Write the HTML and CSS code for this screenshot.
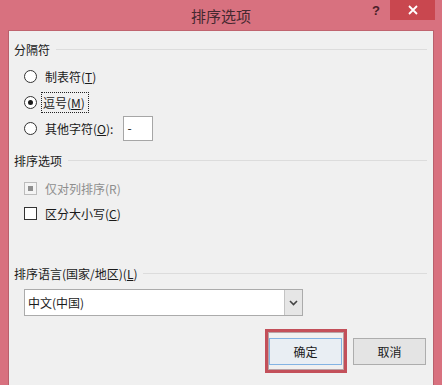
FILE: index.html
```
<!DOCTYPE html>
<html lang="zh-CN">
<head>
  <meta charset="UTF-8" />
  <title>排序选项</title>
  <link rel="stylesheet" href="styles.css">
</head>
<body>
  <div class="window">
    <div class="titlebar">
      <span class="title">排序选项</span>
      <span class="help">?</span>
      <span class="close">
        <svg width="10" height="10" viewBox="0 0 10 10"><path d="M1 1 L9 9 M9 1 L1 9" stroke="#fff" stroke-width="1.8"/></svg>
      </span>
    </div>

    <div class="client">
      <div class="group-title"><span>分隔符</span><i></i></div>
      <div class="opt-row">
        <span class="radio"></span>
        <span class="lbl">制表符(<u>T</u>)</span>
      </div>
      <div class="opt-row">
        <span class="radio checked"></span>
        <span class="lbl focus">逗号(<u>M</u>)</span>
      </div>
      <div class="opt-row">
        <span class="radio"></span>
        <span class="lbl">其他字符(<u>O</u>):</span>
        <span class="small-input">-</span>
      </div>

      <div class="group-title second"><span>排序选项</span><i></i></div>
      <div class="chk-row disabled">
        <span class="checkbox mixed"></span>
        <span class="lbl">仅对列排序(R)</span>
      </div>
      <div class="chk-row">
        <span class="checkbox"></span>
        <span class="lbl">区分大小写(<u>C</u>)</span>
      </div>

      <div class="group-title third"><span>排序语言(国家/地区)(<u>L</u>)</span><i></i></div>
      <div class="select">
        <span class="select-text">中文(中国)</span>
        <span class="select-btn">
          <svg width="9" height="6" viewBox="0 0 9 6"><path d="M1 1 L4.5 4.5 L8 1" fill="none" stroke="#444" stroke-width="1.6"/></svg>
        </span>
      </div>

      <div class="buttons">
        <button class="btn default">确定</button>
        <button class="btn">取消</button>
      </div>
    </div>
  </div>
</body>
</html>
```

FILE: styles.css
```
body {
  margin: 0;
  background: #d8717f;
  font-family: "Noto Sans CJK SC", "Microsoft YaHei", sans-serif;
  font-size: 12px;
  color: #1a1a1a;
}
.window {
  width: 442px;
  height: 385px;
}
.titlebar {
  height: 30px;
  position: relative;
  display: flex;
  justify-content: center;
  align-items: center;
}
.title {
  font-size: 15px;
  color: #452830;
}
.help {
  position: absolute;
  left: 372px;
  top: 3px;
  font-family: "Liberation Sans", sans-serif;
  font-weight: bold;
  font-size: 13px;
  color: #4a1e28;
}
.close {
  position: absolute;
  left: 390px;
  top: 0;
  width: 45px;
  height: 20px;
  background: #c9474f;
  display: flex;
  justify-content: center;
  align-items: center;
}
.client {
  margin: 0 8px;
  height: 345px;
  background: #f0f0f0;
  border: 1px solid #b9606c;
  border-top-color: #c0646f;
  padding-top: 10px;
  width: 424px;
  position: relative;
}
.group-title {
  display: flex;
  align-items: center;
  height: 16px;
  padding: 0 6px 0 5px;
  gap: 6px;
}
.group-title i {
  flex: 1;
  border-top: 1px solid #dcdcdc;
}
.group-title.second { margin-top: 11px; }
.group-title.third { margin-top: 39px; }
.opt-row {
  display: flex;
  align-items: center;
  height: 26px;
  padding-left: 15px;
}
.group-title + .opt-row { margin-top: 6px; }
.radio {
  width: 11px;
  height: 11px;
  border: 1px solid #333;
  border-radius: 50%;
  background: #fff;
  display: flex;
  justify-content: center;
  align-items: center;
  margin-right: 5px;
}
.radio.checked::after {
  content: "";
  width: 5px;
  height: 5px;
  border-radius: 50%;
  background: #1a1a1a;
}
.lbl {
  padding: 1px 2px;
  border: 1px dotted transparent;
  line-height: 15px;
}
.lbl.focus {
  border-color: #222;
  margin-left: -1px;
  padding: 2px 3px 2px 1px;
}
.small-input {
  width: 30px;
  height: 25px;
  border: 1px solid #a6a6a6;
  background: #fff;
  margin-left: 7px;
  padding-left: 3px;
  box-sizing: border-box;
  line-height: 22px;
}
.group-title.second + .chk-row { margin-top: 8px; }
.chk-row {
  display: flex;
  align-items: center;
  height: 25px;
  padding-left: 15px;
}
.checkbox {
  width: 11px;
  height: 11px;
  border: 1px solid #333;
  background: #fff;
  margin-right: 5px;
  display: flex;
  justify-content: center;
  align-items: center;
}
.chk-row.disabled { color: #8e8e8e; }
.chk-row.disabled .checkbox {
  border-color: #bcbcbc;
  background: #f4f4f4;
}
.checkbox.mixed::after {
  content: "";
  width: 5px;
  height: 5px;
  background: #8f8f8f;
}
.select {
  margin: 8px 0 0 15px;
  width: 279px;
  height: 27px;
  border: 1px solid #ababab;
  background: #fff;
  box-sizing: border-box;
  display: flex;
  align-items: center;
}
.select-text {
  flex: 1;
  padding-left: 3px;
}
.select-btn {
  width: 17px;
  height: 100%;
  background: #e6e6e6;
  border-left: 1px solid #c4c4c4;
  display: flex;
  justify-content: center;
  align-items: center;
}
.buttons {
  display: flex;
  justify-content: flex-end;
  gap: 11px;
  margin-top: 22px;
  padding-right: 7px;
}
.btn {
  width: 73px;
  height: 27px;
  font-family: inherit;
  font-size: 12px;
  color: #1a1a1a;
  background: #e4e4e4;
  border: 1px solid #adadad;
  padding: 0;
  position: relative;
}
.btn.default {
  background: #e9eef3;
  border-color: #83b3e3;
}
.btn.default::before {
  content: "";
  position: absolute;
  left: -5px;
  right: -6px;
  top: -10px;
  bottom: -9px;
  border: 3px solid #c3505a;
  box-shadow: inset 0 0 0 1px #b9a3a6;
}
```
